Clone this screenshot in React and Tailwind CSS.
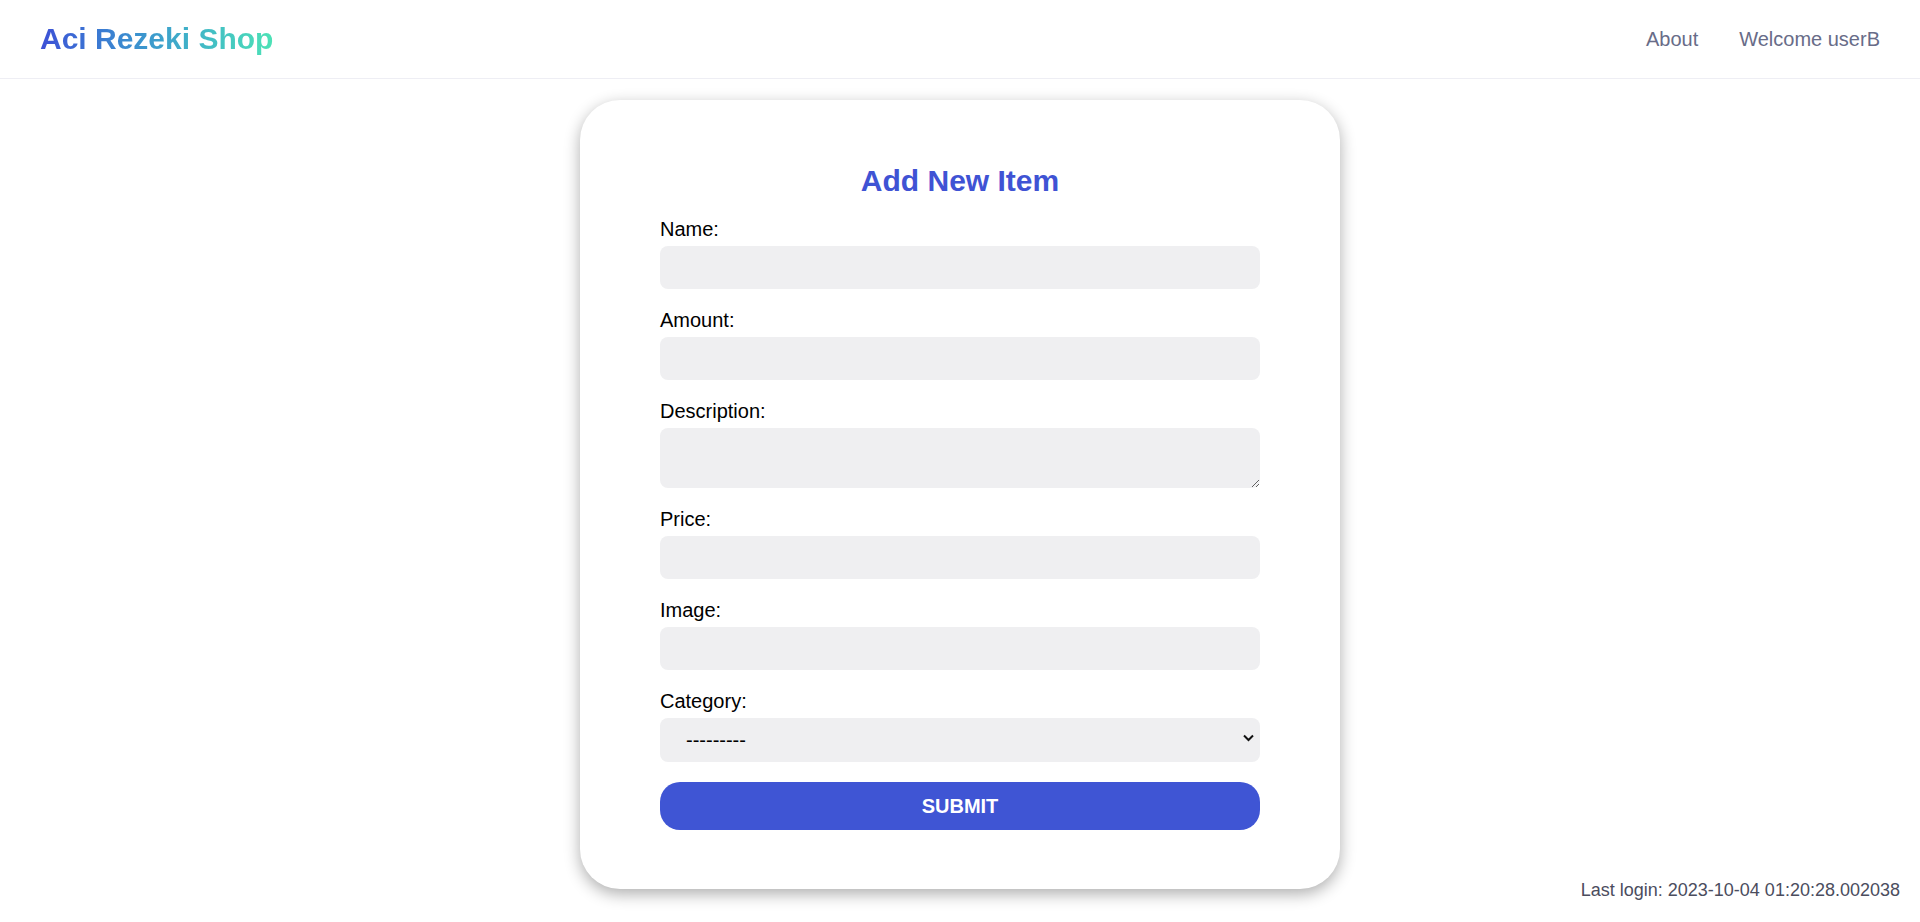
import React from "react";

const font = { fontFamily: '"Liberation Sans", Arial, sans-serif' };

function Field({ label, children }) {
  return (
    <div className="flex flex-col gap-[5px]">
      <label className="text-[20px] leading-[23px] text-black">{label}</label>
      {children}
    </div>
  );
}

export default function App() {
  const inputCls =
    "w-full h-[43px] rounded-[8px] bg-[#efeff1] border-0 outline-none px-3 text-[20px]";
  return (
    <div className="min-h-[922px] bg-white relative" style={font}>
      <nav className="h-[79px] border-b border-[#eeeef4] flex items-center justify-between px-10">
        <div className="text-[30px] font-bold leading-none bg-gradient-to-r from-[#3d4fd6] to-[#4de2b6] bg-clip-text text-transparent pb-[1px]">
          Aci Rezeki Shop
        </div>
        <div className="flex items-center gap-[41px] text-[20px] text-[#686c88]">
          <a className="cursor-pointer">About</a>
          <a className="cursor-pointer">Welcome userB</a>
        </div>
      </nav>

      <main className="flex justify-center pt-[21px]">
        <div className="w-[760px] h-[789px] bg-white rounded-[40px] shadow-[0_5px_16px_rgba(0,0,0,0.32)] px-20 pt-[63px]">
          <h1 className="text-[30px] leading-[35px] font-bold text-[#3f53d4] text-center mb-[20px]">
            Add New Item
          </h1>
          <form className="flex flex-col gap-[20px]" onSubmit={(e) => e.preventDefault()}>
            <Field label="Name:">
              <input type="text" className={inputCls} />
            </Field>
            <Field label="Amount:">
              <input type="text" className={inputCls} />
            </Field>
            <Field label="Description:">
              <textarea className="w-full h-[60px] rounded-[8px] bg-[#efeff1] border-0 outline-none px-3 py-2 text-[20px] block" />
            </Field>
            <Field label="Price:">
              <input type="text" className={inputCls} />
            </Field>
            <Field label="Image:">
              <input type="text" className={inputCls} />
            </Field>
            <Field label="Category:">
              <div className="relative">
                <select className="w-full h-[44px] rounded-[8px] bg-[#efeff1] border-0 outline-none pl-[26px] text-[20px] text-black appearance-none">
                  <option>---------</option>
                </select>
                <svg
                  className="absolute right-[6px] top-[16px] pointer-events-none"
                  width="11"
                  height="8"
                  viewBox="0 0 11 8"
                >
                  <path d="M1 1.5 L5.5 6 L10 1.5" fill="none" stroke="#111" strokeWidth="2" />
                </svg>
              </div>
            </Field>
            <button
              type="submit"
              className="w-full h-[48px] rounded-[20px] bg-[#3f55d4] text-white text-[20px] font-bold"
            >
              SUBMIT
            </button>
          </form>
        </div>
      </main>

      <div className="absolute right-[20px] bottom-[21px] text-[18px] leading-[21px] text-[#4b4d5e]">
        Last login: 2023-10-04 01:20:28.002038
      </div>
    </div>
  );
}
